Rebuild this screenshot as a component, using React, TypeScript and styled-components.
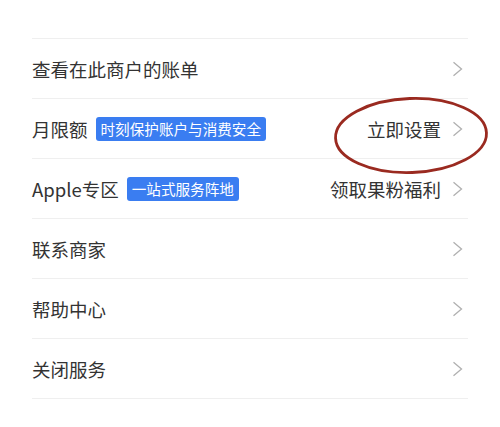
import * as React from 'react';
import styled, { createGlobalStyle } from 'styled-components';

const GlobalStyle = createGlobalStyle`
  html, body {
    margin: 0;
    padding: 0;
    background: #ffffff;
  }
  body {
    font-family: "Noto Sans CJK SC", "Noto Sans", sans-serif;
  }
`;

const Page = styled.div`
  position: relative;
  width: 500px;
  height: 427px;
  overflow: hidden;
  background: #ffffff;
  padding: 38px 32px 0 32px;
  box-sizing: border-box;
`;

const List = styled.ul`
  list-style: none;
  margin: 0;
  padding: 0;
  border-top: 1px solid #efefef;
`;

const Row = styled.li`
  display: flex;
  align-items: center;
  height: 59px;
  padding-right: 5px;
  border-bottom: 1px solid #efefef;
`;

const Label = styled.span`
  font-size: 18.5px;
  color: #333333;
  white-space: nowrap;
`;

const Badge = styled.span`
  display: inline-flex;
  align-items: center;
  height: 24px;
  margin-left: 8px;
  padding: 0 5px;
  border-radius: 3px;
  background: #3a7df1;
  color: #ffffff;
  font-size: 14.6px;
  white-space: nowrap;
`;

const Extra = styled.span`
  margin-left: auto;
  font-size: 18.5px;
  color: #333333;
  white-space: nowrap;
`;

const Arrow = styled.svg<{ $gap: boolean }>`
  flex: none;
  width: 11px;
  height: 16px;
  margin-left: ${(p) => (p.$gap ? '11px' : 'auto')};
`;

const Ring = styled.svg`
  position: absolute;
  left: 332px;
  top: 95px;
  width: 158px;
  height: 81px;
  pointer-events: none;
`;

const Chevron = ({ gap }: { gap: boolean }) => (
  <Arrow $gap={gap} viewBox="0 0 11 16">
    <path d="M1.5 1.2 L9.5 8 L1.5 14.8" fill="none" stroke="#b0b0b0" strokeWidth="1.3" />
  </Arrow>
);

const ITEMS = [
  { label: '查看在此商户的账单' },
  { label: '月限额', badge: '时刻保护账户与消费安全', extra: '立即设置' },
  { label: 'Apple专区', badge: '一站式服务阵地', extra: '领取果粉福利' },
  { label: '联系商家' },
  { label: '帮助中心' },
  { label: '关闭服务' },
];

const App: React.FC = () => {
  return (
    <Page>
      <GlobalStyle />
      <List>
        {ITEMS.map((item) => (
          <Row key={item.label}>
            <Label>{item.label}</Label>
            {item.badge && <Badge>{item.badge}</Badge>}
            {item.extra && <Extra>{item.extra}</Extra>}
            <Chevron gap={!!item.extra} />
          </Row>
        ))}
      </List>
      <Ring viewBox="0 0 158 81">
        <ellipse
          cx="79"
          cy="40.5"
          rx="75.5"
          ry="37"
          fill="none"
          stroke="#9a2a20"
          strokeWidth="2.8"
          transform="rotate(-2 79 40.5)"
        />
      </Ring>
    </Page>
  );
};

export default App;
